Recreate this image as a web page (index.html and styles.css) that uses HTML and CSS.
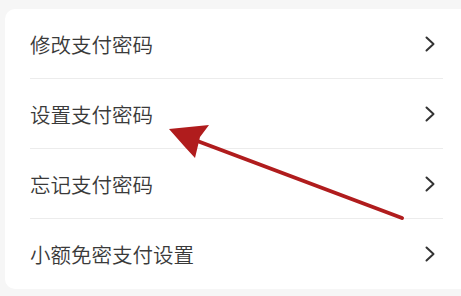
FILE: index.html
```html
<!DOCTYPE html>
<html lang="zh-CN">
<head>
<meta charset="utf-8">
<link rel="stylesheet" href="styles.css">
</head>
<body>
<div class="card">
  <div class="row"><span class="label">修改支付密码</span><svg class="chev" viewBox="0 0 10 16"><path d="M1.5 1.5 L8.5 8 L1.5 14.5" /></svg></div>
  <div class="row"><span class="label">设置支付密码</span><svg class="chev" viewBox="0 0 10 16"><path d="M1.5 1.5 L8.5 8 L1.5 14.5" /></svg></div>
  <div class="row"><span class="label">忘记支付密码</span><svg class="chev" viewBox="0 0 10 16"><path d="M1.5 1.5 L8.5 8 L1.5 14.5" /></svg></div>
  <div class="row last"><span class="label">小额免密支付设置</span><svg class="chev" viewBox="0 0 10 16"><path d="M1.5 1.5 L8.5 8 L1.5 14.5" /></svg></div>
</div>
<svg class="arrow" viewBox="0 0 461 296" width="461" height="296">
  <line x1="402" y1="218" x2="192" y2="139" stroke="#b01c1d" stroke-width="4" stroke-linecap="round"/>
  <polygon points="169,129 209,125 200,137 195,158 184,146" fill="#b01c1d"/>
</svg>
</body>
</html>
```
FILE: styles.css
```css
html, body {
  margin: 0;
  padding: 0;
}
body {
  background: #f6f6f6;
  width: 461px;
  height: 296px;
  overflow: hidden;
  position: relative;
  font-family: "Noto Sans CJK SC", "Noto Sans", sans-serif;
}
.card {
  margin: 9px 0 0 5px;
  width: 466px;
  background: #ffffff;
  border-radius: 10px;
}
.row {
  margin-left: 25px;
  width: 413px;
  height: 70px;
  box-sizing: border-box;
  border-bottom: 1px solid #ececec;
  display: flex;
  align-items: center;
  justify-content: space-between;
  padding-right: 8px;
}
.row.last {
  border-bottom: none;
}
.label {
  font-size: 20.5px;
  font-weight: 350;
  color: #3a3a3a;
}
.chev {
  width: 10px;
  height: 16px;
}
.chev path {
  fill: none;
  stroke: #333333;
  stroke-width: 2;
  stroke-linecap: round;
  stroke-linejoin: round;
}
.arrow {
  position: absolute;
  left: 0;
  top: 0;
  pointer-events: none;
}
```
